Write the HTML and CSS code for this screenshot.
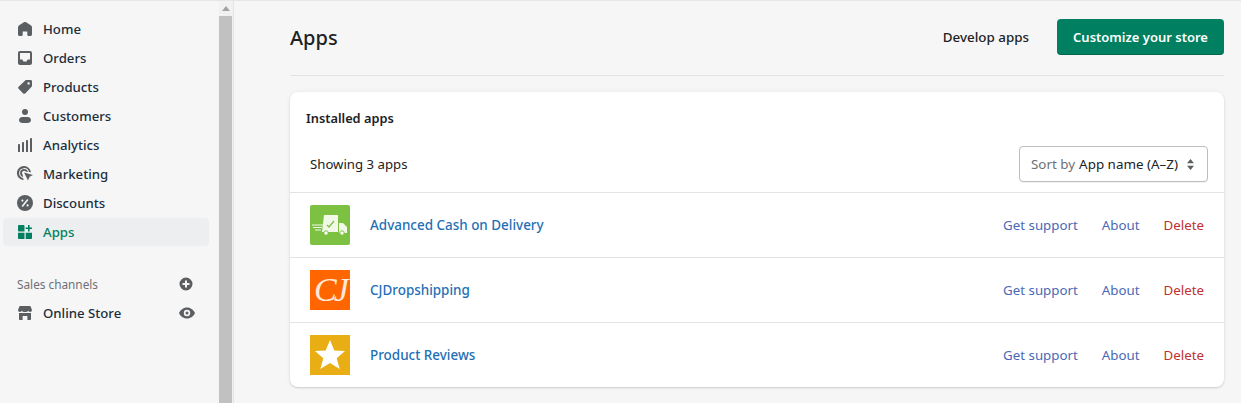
FILE: index.html
```html
<!DOCTYPE html>
<html lang="en">
<head>
  <meta charset="UTF-8" />
  <title>Apps</title>
  <link rel="stylesheet" href="styles.css">
</head>
<body>
  <div class="frame">
    <nav class="sidebar">
      <ul class="nav-list">
        <li class="nav-item">
          <svg class="nav-icon" viewBox="0 0 14 14"><path d="M7 0 C6.600 0 6.200.1 5.900.3 L1.200 3.300 C.4 3.800 0 4.500 0 5.300 V12.600 C0 13.400.6 14 1.400 14 H3.600 C4.300 14 4.700 13.400 4.700 12.800 V9.600 H9.300 V12.800 C9.300 13.400 9.700 14 10.400 14 H12.600 C13.400 14 14 13.400 14 12.600 V5.300 C14 4.500 13.600 3.800 12.800 3.300 L8.100.3 C7.800.1 7.400 0 7 0 Z"/></svg>
          <span>Home</span>
        </li>
        <li class="nav-item">
          <svg class="nav-icon" viewBox="0 0 14 14"><path fill-rule="evenodd" d="M2 0 H12 C13.100 0 14 .9 14 2 V12 C14 13.100 13.100 14 12 14 H2 C.9 14 0 13.100 0 12 V2 C0 .9.9 0 2 0 Z M2 2 V8.500 H4.400 L5.400 10.500 H8.600 L9.600 8.500 H12 V2 Z"/></svg>
          <span>Orders</span>
        </li>
        <li class="nav-item">
          <svg class="nav-icon" viewBox="0 0 14 14"><path fill-rule="evenodd" d="M8.200 0 H12.600 C13.400 0 14 .6 14 1.400 V5.800 C14 6.200 13.800 6.600 13.600 6.800 L7.200 13.400 C6.600 14 5.800 14 5.200 13.400 L.6 8.800 C0 8.200 0 7.400.6 6.800 L7.200.4 C7.400.2 7.800 0 8.200 0 Z M10.600 2.200 A1.200 1.200 0 1 0 10.600 4.600 A1.200 1.200 0 1 0 10.600 2.200 Z"/></svg>
          <span>Products</span>
        </li>
        <li class="nav-item">
          <svg class="nav-icon" viewBox="0 0 14 14"><circle cx="7" cy="3" r="3"/><path d="M4.200 8 H9.800 C11.400 8 12.800 9.300 13 11 C13 12.800 11.400 14 9.600 14 H4.400 C2.600 14 1 12.800 1 11 C1.200 9.300 2.600 8 4.200 8 Z"/></svg>
          <span>Customers</span>
        </li>
        <li class="nav-item">
          <svg class="nav-icon" viewBox="0 0 14 14"><rect x="0" y="6" width="2" height="8" rx=".6"/><rect x="4" y="4" width="2" height="10" rx=".6"/><rect x="8" y="2" width="2" height="12" rx=".6"/><rect x="12" y="0" width="2" height="14" rx=".6"/></svg>
          <span>Analytics</span>
        </li>
        <li class="nav-item">
          <svg class="nav-icon nav-icon-wide" viewBox="0 0 16 16"><path fill-rule="evenodd" d="M7 0 A7 7 0 0 1 14 6.600 L12 6 A5 5 0 1 0 6 12 L6.800 14 A7 7 0 0 1 7 0 Z M7 3 A4 4 0 0 1 11 6 L8.600 5.600 A1.900 1.900 0 1 0 5.600 8.400 L6.200 10.900 A4 4 0 0 1 7 3 Z"/><path d="M7 6.400 L16 9 L12.600 10.800 L11 14.600 Z"/></svg>
          <span>Marketing</span>
        </li>
        <li class="nav-item">
          <svg class="nav-icon nav-icon-wide" viewBox="0 0 16 16"><circle cx="8" cy="8" r="8"/><path d="M10.800 4.400 L5.200 11.600" stroke="#f6f6f7" stroke-width="1.600" fill="none"/><circle cx="5.400" cy="5.600" r="1.100" fill="#f6f6f7"/><circle cx="10.600" cy="10.400" r="1.100" fill="#f6f6f7"/></svg>
          <span>Discounts</span>
        </li>
        <li class="nav-item nav-item-active">
          <svg class="nav-icon" viewBox="0 0 14 14"><path d="M1 0 H5.500 C6 0 6.500.5 6.500 1 V6.500 H1 C.5 6.500 0 6 0 5.500 V1 C0 .5.5 0 1 0 Z"/><path d="M0 7.700 H6.500 V14 H1 C.5 14 0 13.500 0 13 Z"/><path d="M7.700 7.700 H14 V13 C14 13.500 13.500 14 13 14 H7.700 Z"/><path d="M10 0 H11.600 V2.400 H14 V4 H11.600 V6.400 H10 V4 H7.600 V2.400 H10 Z"/></svg>
          <span>Apps</span>
        </li>
      </ul>

      <div class="channels-head">
        <span>Sales channels</span>
        <svg class="side-action" viewBox="0 0 14 14"><path fill-rule="evenodd" d="M7 .5 A6.500 6.500 0 1 1 7 13.500 A6.500 6.500 0 1 1 7 .5 Z M6 3.500 V6 H3.500 V8 H6 V10.500 H8 V8 H10.500 V6 H8 V3.500 Z"/></svg>
      </div>
      <div class="nav-item nav-item-channel">
        <svg class="nav-icon" viewBox="0 0 14 14"><path d="M1.600 0 H12.400 L14 4 C14 5.200 13.100 6 12 6 C11.100 6 10.400 5.500 10.200 4.800 C9.900 5.500 9 6 8.200 6 H5.800 C5 6 4.100 5.500 3.800 4.800 C3.600 5.500 2.900 6 2 6 C.9 6 0 5.200 0 4 Z"/><path d="M1 7 H13 V13 C13 13.600 12.600 14 12 14 H9.400 V10 H4.600 V14 H2 C1.400 14 1 13.600 1 13 Z"/></svg>
        <span>Online Store</span>
        <svg class="side-action side-action-eye" viewBox="0 0 16 12"><path fill-rule="evenodd" d="M8 .5 C11.800.5 14.800 3 16 6 C14.800 9 11.800 11.500 8 11.500 C4.200 11.500 1.200 9 0 6 C1.200 3 4.200.5 8 .5 Z M8 2.800 A3.200 3.200 0 1 0 8 9.200 A3.200 3.200 0 1 0 8 2.800 Z M8 4.500 A1.500 1.500 0 1 1 8 7.500 A1.500 1.500 0 1 1 8 4.500 Z"/></svg>
      </div>
    </nav>

    <div class="scrollbar">
      <div class="scroll-arrow"></div>
      <div class="scroll-thumb"></div>
    </div>

    <main class="content">
      <header class="page-head">
        <h1>Apps</h1>
        <div class="page-actions">
          <a class="plain-action">Develop apps</a>
          <button class="primary-btn">Customize your store</button>
        </div>
      </header>

      <section class="card">
        <h2>Installed apps</h2>
        <div class="card-filter">
          <span>Showing 3 apps</span>
          <div class="sort-select">
            <span class="sort-label">Sort by</span>
            <span>App name (A–Z)</span>
            <svg class="sort-caret" viewBox="0 0 7 11"><path d="M3.500 0 L7 4.200 H0 Z M0 6.800 H7 L3.500 11 Z"/></svg>
          </div>
        </div>

        <div class="app-row">
          <div class="app-logo logo-cod">
            <svg viewBox="0 0 40 40" width="40" height="40">
              <path d="M14 10 L28 10 L28 27 L12 27 Z" fill="#f1f8e8"/>
              <path d="M17 20 L19 22 L24 16" stroke="#7dc142" stroke-width="1.300" fill="none"/>
              <path d="M29 18 H33 L37 22 V28 H29 Z" fill="#f1f8e8"/>
              <path d="M2 20 H13 M3 22.500 H12 M5 25 H11" stroke="#f1f8e8" stroke-width="1"/>
              <circle cx="16" cy="28" r="2.200" fill="#fff" stroke="#7dc142"/>
              <circle cx="32" cy="28" r="2.200" fill="#fff" stroke="#7dc142"/>
            </svg>
          </div>
          <a class="app-name">Advanced Cash on Delivery</a>
          <div class="app-links">
            <a>Get support</a>
            <a>About</a>
            <a class="link-danger">Delete</a>
          </div>
        </div>

        <div class="app-row">
          <div class="app-logo logo-cj"><span>CJ</span></div>
          <a class="app-name">CJDropshipping</a>
          <div class="app-links">
            <a>Get support</a>
            <a>About</a>
            <a class="link-danger">Delete</a>
          </div>
        </div>

        <div class="app-row">
          <div class="app-logo logo-reviews">
            <svg viewBox="0 0 40 40" width="40" height="40"><polygon points="20,5 24.300,15.500 35,16 26.700,23.200 29.700,34 20,28 10.300,34 13.300,23.200 5,16 15.700,15.500" fill="#fff"/></svg>
          </div>
          <a class="app-name">Product Reviews</a>
          <div class="app-links">
            <a>Get support</a>
            <a>About</a>
            <a class="link-danger">Delete</a>
          </div>
        </div>
      </section>
    </main>
  </div>
</body>
</html>
```

FILE: styles.css
```css
html, body {
  margin: 0;
  padding: 0;
  height: 100%;
  overflow: hidden;
}
body {
  font-family: "Noto Sans", "Open Sans", sans-serif;
  font-size: 13.2px;
  background: #f6f6f7;
  color: #202223;
}
.frame {
  display: flex;
  height: 403px;
  border-top: 1px solid #e6e6e6;
  box-sizing: border-box;
}

/* sidebar */
.sidebar {
  width: 219px;
  flex-shrink: 0;
  padding-top: 14px;
  box-sizing: border-box;
}
.nav-list {
  list-style: none;
  margin: 0;
  padding: 0 10px 0 3px;
}
.nav-item {
  display: flex;
  align-items: center;
  height: 28px;
  margin-bottom: 1px;
  padding-left: 15px;
  border-radius: 4px;
  font-weight: 500;
  color: #202e3b;
}
.nav-icon {
  width: 14px;
  height: 14px;
  margin-right: 11px;
  fill: #5c5f62;
  flex-shrink: 0;
}
.nav-icon-wide {
  width: 16px;
  height: 16px;
  margin-left: -1px;
  margin-right: 10px;
}
.nav-item-active {
  background: #edeeef;
  color: #008060;
}
.nav-item-active .nav-icon {
  fill: #008060;
}
.channels-head {
  display: flex;
  align-items: center;
  justify-content: space-between;
  margin-top: 28px;
  height: 20px;
  padding: 0 26px 0 17px;
  font-size: 11.8px;
  color: #6d7175;
}
.side-action {
  width: 14px;
  height: 14px;
  fill: #5c5f62;
}
.side-action-eye {
  width: 16px;
  height: 12px;
  margin-left: auto;
}
.nav-item-channel {
  margin: 5px 10px 0 3px;
  padding-right: 14px;
}

/* fake windows scrollbar */
.scrollbar {
  width: 15px;
  flex-shrink: 0;
  background: #f1f1f1;
  border-right: 1px solid #e3e3e3;
  box-sizing: border-box;
}
.scroll-arrow {
  height: 15px;
  position: relative;
}
.scroll-arrow::after {
  content: "";
  position: absolute;
  left: 3px;
  top: 5px;
  border-left: 4px solid transparent;
  border-right: 4px solid transparent;
  border-bottom: 5px solid #a3a3a3;
}
.scroll-thumb {
  width: 13px;
  height: 400px;
  background: #c1c1c1;
}

/* main area */
.content {
  width: 934px;
  margin-left: 56px;
}
.page-head {
  display: flex;
  align-items: center;
  justify-content: space-between;
  height: 75px;
  border-bottom: 1px solid #e1e3e5;
  box-sizing: border-box;
  padding-bottom: 2px;
  margin-bottom: 16px;
}
h1 {
  margin: 0;
  font-size: 20px;
  font-weight: 500;
  color: #202223;
}
.page-actions {
  display: flex;
  align-items: center;
  gap: 28px;
}
.plain-action {
  font-size: 13.4px;
  font-weight: 500;
}
.primary-btn {
  width: 167px;
  height: 36px;
  background: #008060;
  color: #fff;
  border: none;
  border-radius: 4px;
  font: inherit;
  font-size: 13px;
  font-weight: 600;
  box-shadow: inset 0 -1px 0 rgba(0,0,0,0.2);
}
.card {
  background: #fff;
  border-radius: 8px;
  box-shadow: 0 0 5px rgba(23,24,24,0.05), 0 1px 2px rgba(0,0,0,0.15);
  height: 295px;
}
h2 {
  margin: 0;
  padding: 16px 16px 0;
  height: 20px;
  line-height: 20px;
  font-size: 12.8px;
  font-weight: 600;
  box-sizing: content-box;
}
.card-filter {
  display: flex;
  align-items: center;
  justify-content: space-between;
  height: 36px;
  margin-top: 18px;
  padding: 0 16px 10px 20px;
  border-bottom: 1px solid #e1e3e5;
}
.sort-select {
  display: flex;
  align-items: center;
  gap: 4px;
  width: 189px;
  height: 36px;
  box-sizing: border-box;
  padding: 0 13px 0 11px;
  background: #fff;
  border: 1px solid #babfc3;
  border-radius: 4px;
  box-shadow: 0 1px 0 rgba(0,0,0,0.05);
  font-size: 13.4px;
}
.sort-label {
  color: #6d7175;
}
.sort-caret {
  width: 7px;
  height: 11px;
  fill: #5c5f62;
  margin-left: auto;
}
.app-row {
  display: flex;
  align-items: center;
  height: 65px;
  padding: 0 20px;
  box-sizing: border-box;
  border-bottom: 1px solid #e1e3e5;
}
.app-row:last-child {
  border-bottom-color: transparent;
}
.app-logo {
  width: 40px;
  height: 40px;
  margin-right: 20px;
  flex-shrink: 0;
  overflow: hidden;
}
.logo-cod {
  background: #7dc142;
  border-radius: 2px;
}
.logo-cj {
  background: #ff6600;
  display: flex;
  align-items: center;
  justify-content: center;
}
.logo-cj span {
  font-family: "Liberation Serif", serif;
  font-style: italic;
  font-size: 34px;
  color: #ffe9da;
  letter-spacing: -3px;
}
.logo-reviews {
  background: #e8ae14;
}
.app-name {
  color: #1f6fb5;
  font-size: 13.45px;
  font-weight: 500;
}
.app-links {
  margin-left: auto;
  display: flex;
  gap: 24px;
  color: #4a69b5;
  font-size: 13.3px;
}
.link-danger {
  color: #bf3030;
}
```
